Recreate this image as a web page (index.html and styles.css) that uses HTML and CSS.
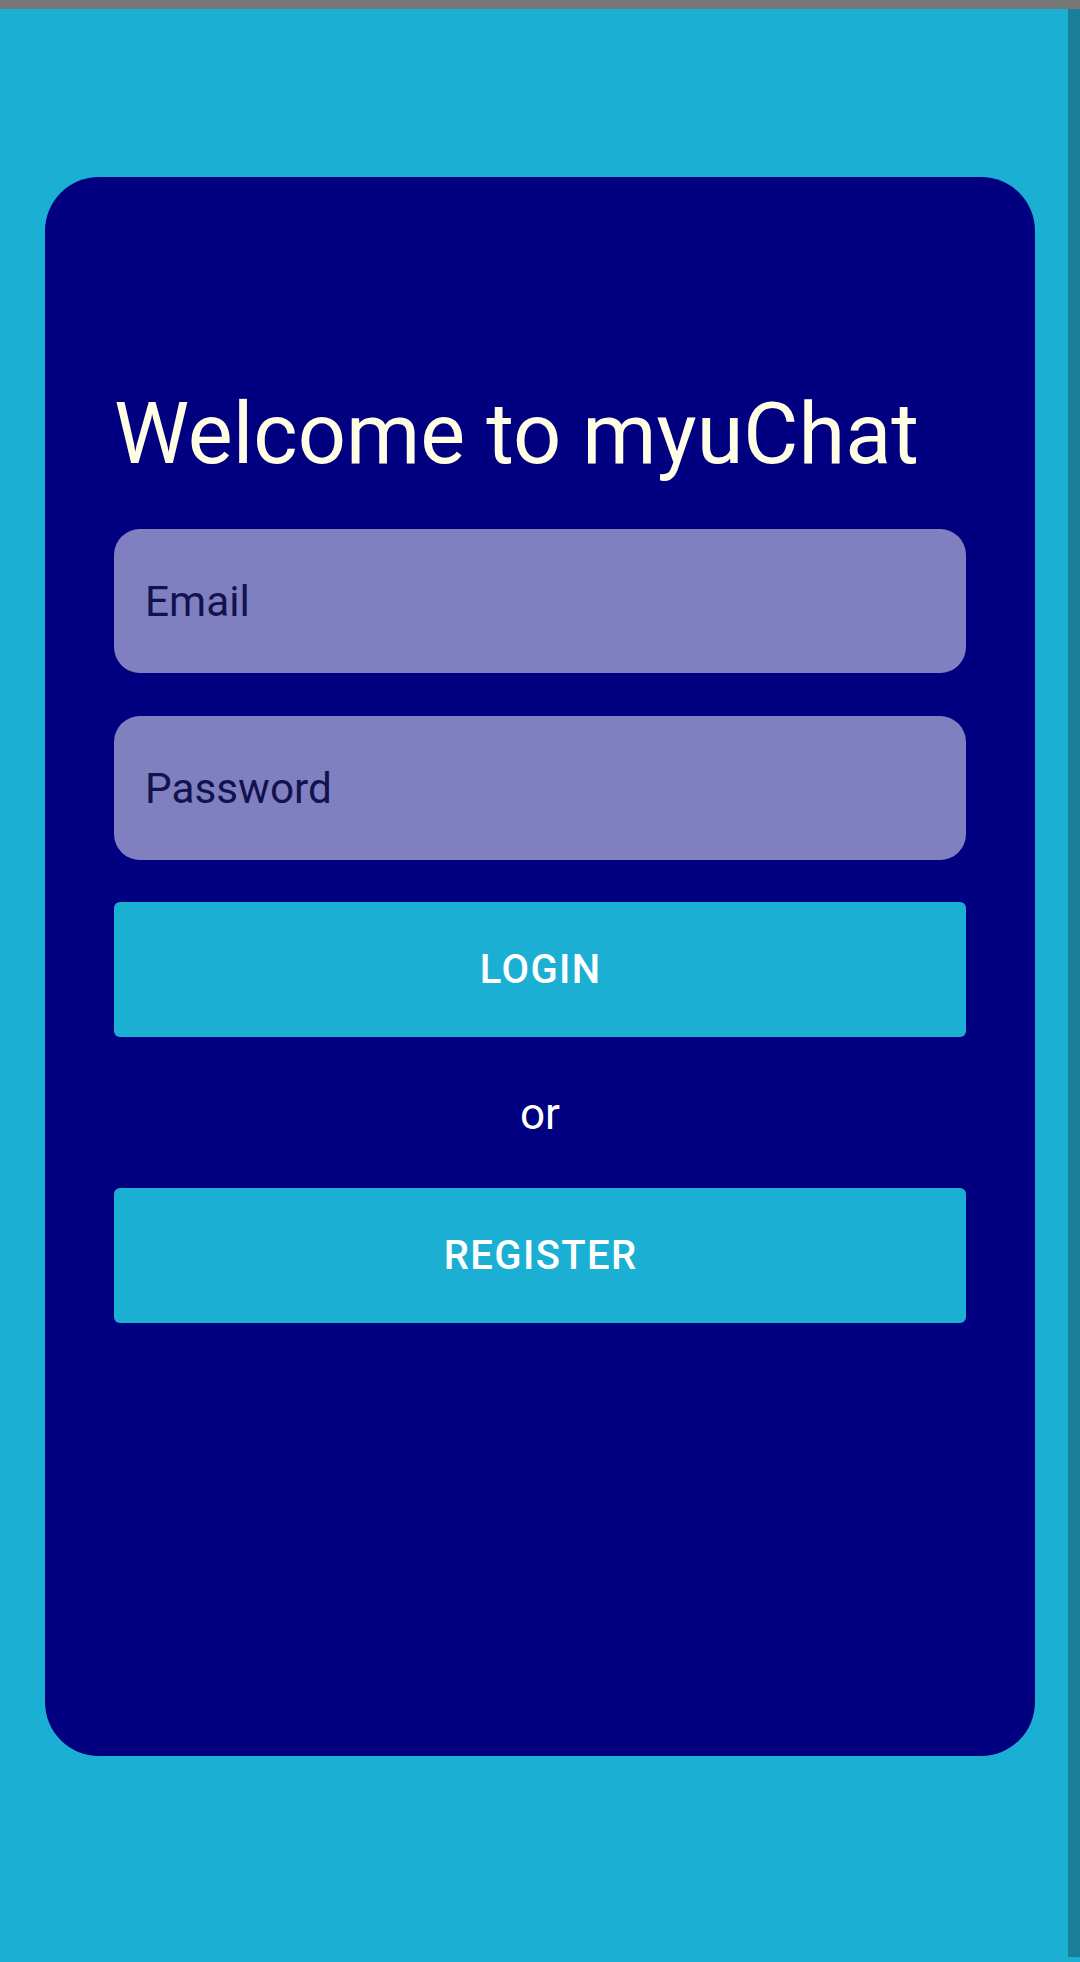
FILE: index.html
```html
<!DOCTYPE html>
<html lang="en">
<head>
<meta charset="utf-8">
<title>myuChat</title>
<link rel="stylesheet" href="styles.css">
</head>
<body>
<div class="statusbar"></div>
<div class="screen">
  <main class="main">
    <section class="card">
      <h1 class="title">Welcome to myuChat</h1>
      <div class="field field-email">Email</div>
      <div class="field field-password">Password</div>
      <button class="btn btn-login">LOGIN</button>
      <div class="or">or</div>
      <button class="btn btn-register">REGISTER</button>
    </section>
  </main>
  <div class="scrollbar"></div>
</div>
</body>
</html>
```

FILE: styles.css
```css
html, body {
  margin: 0;
  padding: 0;
}
body {
  width: 1080px;
  height: 1962px;
  background: #1bafd4;
  font-family: Roboto, "Liberation Sans", sans-serif;
  overflow: hidden;
}
.statusbar {
  height: 9px;
  background: #787878;
}
.screen {
  display: flex;
  height: 1948px;
}
.main {
  flex: 1;
  padding: 168px 33px 0 45px;
}
.scrollbar {
  width: 12px;
  background: #1a7f99;
}
.card {
  box-sizing: border-box;
  height: 1579px;
  background: #000080;
  border-radius: 54px;
  padding: 208px 69px 0 69px;
  display: flex;
  flex-direction: column;
}
.title {
  margin: 0 0 46px 0;
  font-weight: 400;
  font-size: 84.7px;
  line-height: 98px;
  color: #fffde4;
  white-space: nowrap;
}
.field {
  box-sizing: border-box;
  height: 144px;
  border-radius: 26px;
  background: #8080c0;
  padding-left: 31px;
  display: flex;
  align-items: center;
  font-size: 42.3px;
  color: #12124f;
}
.field-email {
  margin-bottom: 43px;
}
.field-password {
  margin-bottom: 42px;
}
.btn {
  height: 135px;
  border: none;
  border-radius: 6px;
  background: #1bafd4;
  color: #ffffff;
  font-family: Roboto, "Liberation Sans", sans-serif;
  font-weight: 500;
  font-size: 40px;
  letter-spacing: 1.4px;
  padding: 0 0 0 1.4px;
  margin: 0;
}
.or {
  margin: 51px 0 48px 0;
  text-align: center;
  font-size: 44px;
  line-height: 52px;
  color: #ffffff;
}
```
